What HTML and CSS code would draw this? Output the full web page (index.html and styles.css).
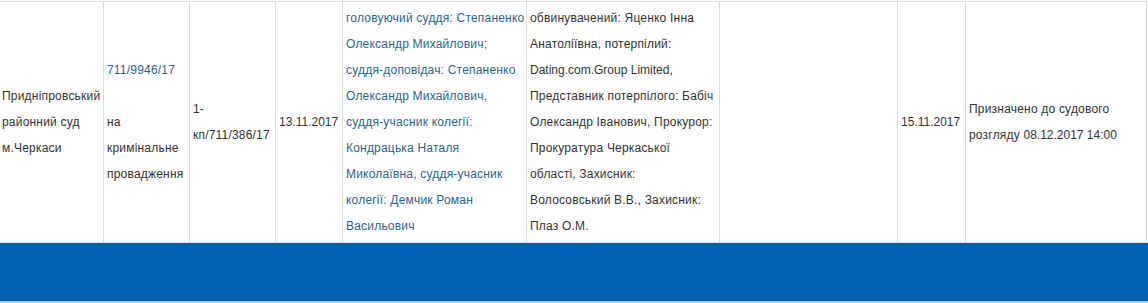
FILE: index.html
```html
<!DOCTYPE html>
<html lang="uk">
<head>
<meta charset="utf-8">
<title>Справи</title>
<link rel="stylesheet" href="styles.css">
</head>
<body>
<div class="page">
  <table class="cases">
    <colgroup>
      <col class="c1"><col class="c2"><col class="c3"><col class="c4"><col class="c5"><col class="c6"><col class="c7"><col class="c8"><col class="c9">
    </colgroup>
    <tbody>
      <tr>
        <td class="first">Придніпровський районний суд м.Черкаси</td>
        <td><a href="#" class="link">711/9946/17</a><br><br>на кримінальне провадження</td>
        <td>1-кп/711/386/17</td>
        <td class="num">13.11.2017</td>
        <td class="judges"><a href="#" class="link">головуючий суддя: Степаненко Олександр Михайлович; суддя-доповідач: Степаненко Олександр Михайлович, суддя-учасник колегії: Кондрацька Наталя Миколаївна, суддя-учасник колегії: Демчик Роман Васильович</a></td>
        <td>обвинувачений: Яценко Інна Анатоліївна, потерпілий: <span class="lat">Dating.com.Group Limited,</span> Представник потерпілого: Бабіч Олександр Іванович, Прокурор: Прокуратура Черкаської області, Захисник: Волосовський В.В., Захисник: Плаз О.М.</td>
        <td></td>
        <td class="num">15.11.2017</td>
        <td>Призначено до судового розгляду <span class="lat">08.12.2017 14:00</span></td>
      </tr>
    </tbody>
  </table>
  <footer class="footer"></footer>
</div>
</body>
</html>
```

FILE: styles.css
```css
html, body {
  margin: 0;
  padding: 0;
  background: #fff;
}
body {
  font-family: "Liberation Sans", Arial, sans-serif;
  font-size: 12px;
  color: #333;
}
.page {
  padding-top: 1px;
}
.cases {
  table-layout: fixed;
  border-collapse: separate;
  border-spacing: 0;
  width: 1147px;
  border-top: 1px solid #ddd;
}
.c1 { width: 104px; }
.c2 { width: 86px; }
.c3 { width: 86px; }
.c4 { width: 67px; }
.c5 { width: 184px; }
.c6 { width: 193px; }
.c7 { width: 178px; }
.c8 { width: 68px; }
.c9 { width: 181px; }
.cases td {
  box-sizing: border-box;
  border-right: 1px solid #ddd;
  border-bottom: 1px solid #d4e2ee;
  padding: 3px 3px 3px 3px;
  vertical-align: middle;
  line-height: 26px;
  letter-spacing: 0.2px;
  word-wrap: break-word;
}
.cases td.first {
  padding-left: 2px;
  padding-right: 2px;
}
.cases td.num,
.lat {
  letter-spacing: 0;
}
.cases td.judges {
  padding-right: 1px;
}
.link {
  color: #2a6496;
  text-decoration: none;
}
.footer {
  box-sizing: border-box;
  height: 60px;
  background: #0060b4;
  border-top: 1px solid #22598c;
  border-bottom: 2px solid #a9cbe9;
  box-shadow: inset 0 -1px 0 #0a55a0;
}
```
